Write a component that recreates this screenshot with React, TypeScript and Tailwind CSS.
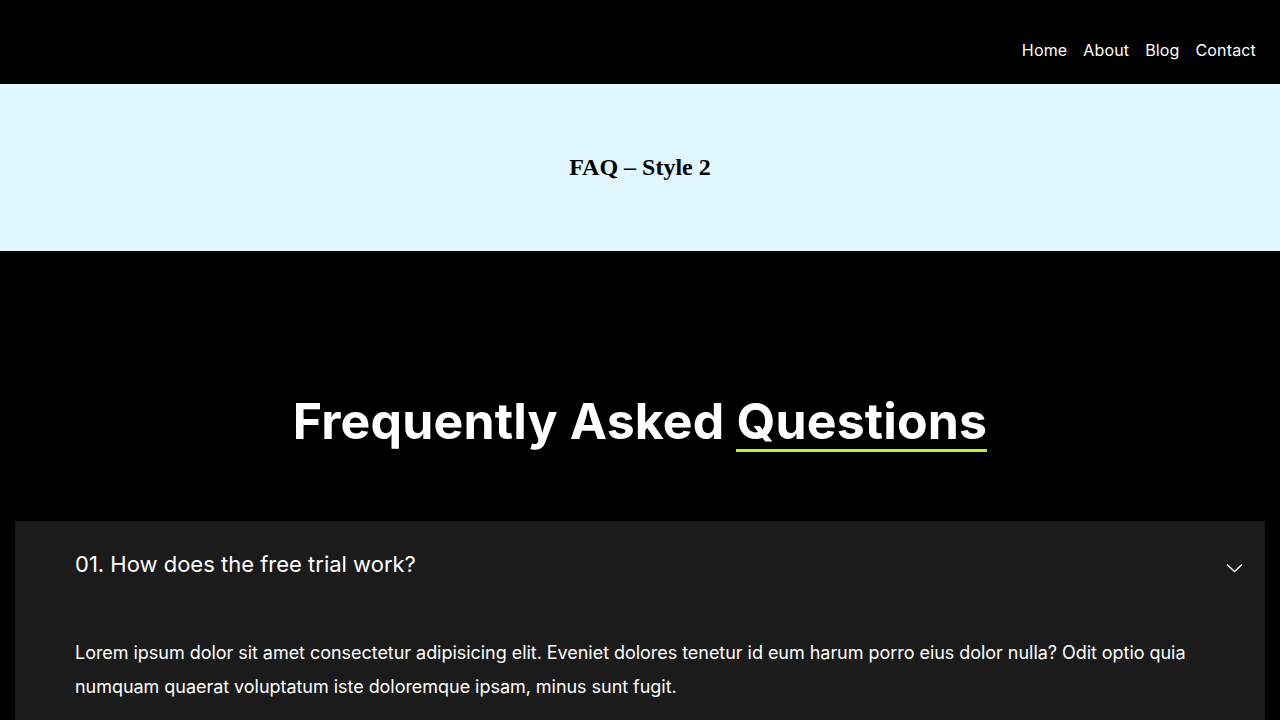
import React from "react";

export default function App() {
  return (
    <div className="min-h-screen bg-black" style={{ fontFamily: "Inter, 'Noto Sans', sans-serif" }}>
      <header className="h-[84px] bg-black flex items-end justify-end pr-6 pb-[22px]">
        <nav className="flex gap-4 text-[16px] text-white leading-6 tracking-[0.15px]">
          <a>Home</a>
          <a>About</a>
          <a>Blog</a>
          <a>Contact</a>
        </nav>
      </header>
      <section className="h-[167px] bg-[#e0f7fe] flex items-center justify-center">
        <h1 className="text-[24px] font-bold text-black -mt-[2px]" style={{ fontFamily: "'Liberation Serif', serif" }}>
          FAQ – Style 2
        </h1>
      </section>
      <section className="bg-black pt-[136px] px-[15px]">
        <h2 className="text-center text-white font-bold text-[50px] leading-[68px] tracking-[0.15px]">
          Frequently Asked{" "}
          <span className="inline-block border-b-[3px] border-[#b9f03c] leading-[56px]">Questions</span>
        </h2>
        <div className="mt-[66px] bg-[#1b1b1b] pb-10">
          <div className="flex items-center justify-between pl-[60px] pr-[22px] pt-[27px]">
            <span className="text-white text-[22px] leading-[32px]">01. How does the free trial work?</span>
            <svg width="17" height="10" viewBox="0 0 17 10" fill="none" className="mt-[8px]">
              <path d="M1 1.5l7.5 7 7.5-7" stroke="white" strokeWidth="1.3" />
            </svg>
          </div>
          <p className="pl-[60px] pr-[70px] mt-[56px] text-white text-[18px] leading-[34px] tracking-[-0.04px]">
            Lorem ipsum dolor sit amet consectetur adipisicing elit. Eveniet dolores tenetur id eum harum porro eius dolor nulla? Odit optio quia numquam quaerat voluptatum iste doloremque ipsam, minus sunt fugit.
          </p>
        </div>
      </section>
    </div>
  );
}
